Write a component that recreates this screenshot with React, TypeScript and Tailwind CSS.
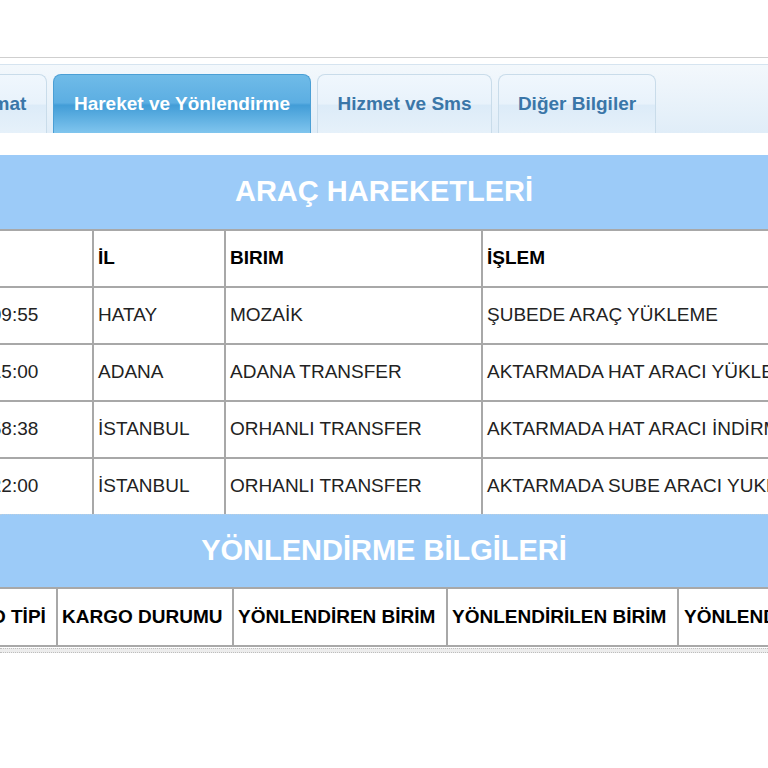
import React from "react";

const rows1 = [
  ["14.03.2024 10:09:55", "HATAY", "MOZAİK", "ŞUBEDE ARAÇ YÜKLEME"],
  ["14.03.2024 21:15:00", "ADANA", "ADANA TRANSFER", "AKTARMADA HAT ARACI YÜKLEME"],
  ["15.03.2024 08:58:38", "İSTANBUL", "ORHANLI TRANSFER", "AKTARMADA HAT ARACI İNDİRME"],
  ["15.03.2024 09:22:00", "İSTANBUL", "ORHANLI TRANSFER", "AKTARMADA SUBE ARACI YUKLEME"],
];

function Tab({ label, active, w }: { label: string; active?: boolean; w: string }) {
  return active ? (
    <div
      className={`${w} h-[59px] shrink-0 rounded-t-[8px] border border-b-0 border-[#4a9fd5] bg-[linear-gradient(to_bottom,#6fbbe8_0%,#5caee2_48%,#429dd7_52%,#80c5ee_100%)] flex items-center justify-center text-[19px] font-bold text-white`}
    >
      {label}
    </div>
  ) : (
    <div
      className={`${w} h-[59px] shrink-0 rounded-t-[8px] border border-b-0 border-[#c9dcea] bg-[linear-gradient(to_bottom,#f0f7fd_0%,#e8f2fb_50%,#dcebf8_52%,#e6f1fa_100%)] flex items-center justify-center text-[19px] font-bold text-[#3a76a8]`}
    >
      {label}
    </div>
  );
}

export default function App() {
  return (
    <div className="w-[768px] h-[768px] bg-white overflow-hidden font-['Liberation_Sans',Arial,sans-serif]">
      <div className="h-[57px]" />
      <div className="border-t border-[#cfcfcf]">
        <div className="h-[6px] bg-white" />
        <div className="h-[69px] border-t border-[#d6e4f0] bg-[linear-gradient(to_bottom,#f3f8fc,#e0edf8)] flex items-end overflow-hidden">
          <div className="flex gap-[6px] ml-[-70px]">
            <Tab label="Teslimat" w="w-[117px]" />
            <Tab label="Hareket ve Yönlendirme" w="w-[258px]" active />
            <Tab label="Hizmet ve Sms" w="w-[175px]" />
            <Tab label="Diğer Bilgiler" w="w-[158px]" />
          </div>
        </div>
      </div>
      <div className="h-[22px]" />

      <div className="h-[74px] bg-[#9ccbf8] flex items-center justify-center text-white font-bold text-[29px]">
        ARAÇ HAREKETLERİ
      </div>

      <div className="overflow-hidden">
        <div className="flex w-max ml-[-140px] h-[57px] border-t-2 border-[#a8a8a8] text-[19px] font-bold text-black">
          <div className="w-[234px] border-r-2 border-[#a8a8a8] pl-[4px] flex items-center">TARİH</div>
          <div className="w-[132px] border-r-2 border-[#a8a8a8] pl-[4px] flex items-center">İL</div>
          <div className="w-[257px] border-r-2 border-[#a8a8a8] pl-[4px] flex items-center">BIRIM</div>
          <div className="w-[400px] pl-[4px] flex items-center">İŞLEM</div>
        </div>
        {rows1.map((r, i) => (
          <div
            key={i}
            className="flex w-max ml-[-140px] h-[57px] border-t-2 border-[#a8a8a8] text-[19px] text-[#222]"
          >
            <div className="w-[234px] border-r-2 border-[#a8a8a8] pl-[4px] flex items-center whitespace-nowrap">{r[0]}</div>
            <div className="w-[132px] border-r-2 border-[#a8a8a8] pl-[4px] flex items-center whitespace-nowrap">{r[1]}</div>
            <div className="w-[257px] border-r-2 border-[#a8a8a8] pl-[4px] flex items-center whitespace-nowrap">{r[2]}</div>
            <div className="w-[400px] pl-[4px] flex items-center whitespace-nowrap">{r[3]}</div>
          </div>
        ))}
      </div>

      <div className="h-[73px] border-t border-dotted border-[#b8cde0] bg-[#9ccbf8] flex items-center justify-center text-white font-bold text-[29px]">
        YÖNLENDİRME BİLGİLERİ
      </div>

      <div className="overflow-hidden">
        <div className="flex w-max ml-[-69px] h-[60px] border-y-2 border-[#a8a8a8] text-[19px] font-bold text-black whitespace-nowrap">
          <div className="w-[127px] border-r-2 border-[#a8a8a8] pl-[4px] flex items-center">KARGO TİPİ</div>
          <div className="w-[176px] border-r-2 border-[#a8a8a8] pl-[4px] flex items-center">KARGO DURUMU</div>
          <div className="w-[214px] border-r-2 border-[#a8a8a8] pl-[4px] flex items-center">YÖNLENDİREN BİRİM</div>
          <div className="w-[231px] border-r-2 border-[#a8a8a8] pl-[4px] flex items-center">YÖNLENDİRİLEN BİRİM</div>
          <div className="w-[300px] pl-[5px] flex items-center">YÖNLENDİRME TARİHİ</div>
        </div>
        <div className="mt-[1px] h-[5px] border-y border-dotted border-[#bdbdbd] bg-[#ececec]" />
      </div>
    </div>
  );
}
